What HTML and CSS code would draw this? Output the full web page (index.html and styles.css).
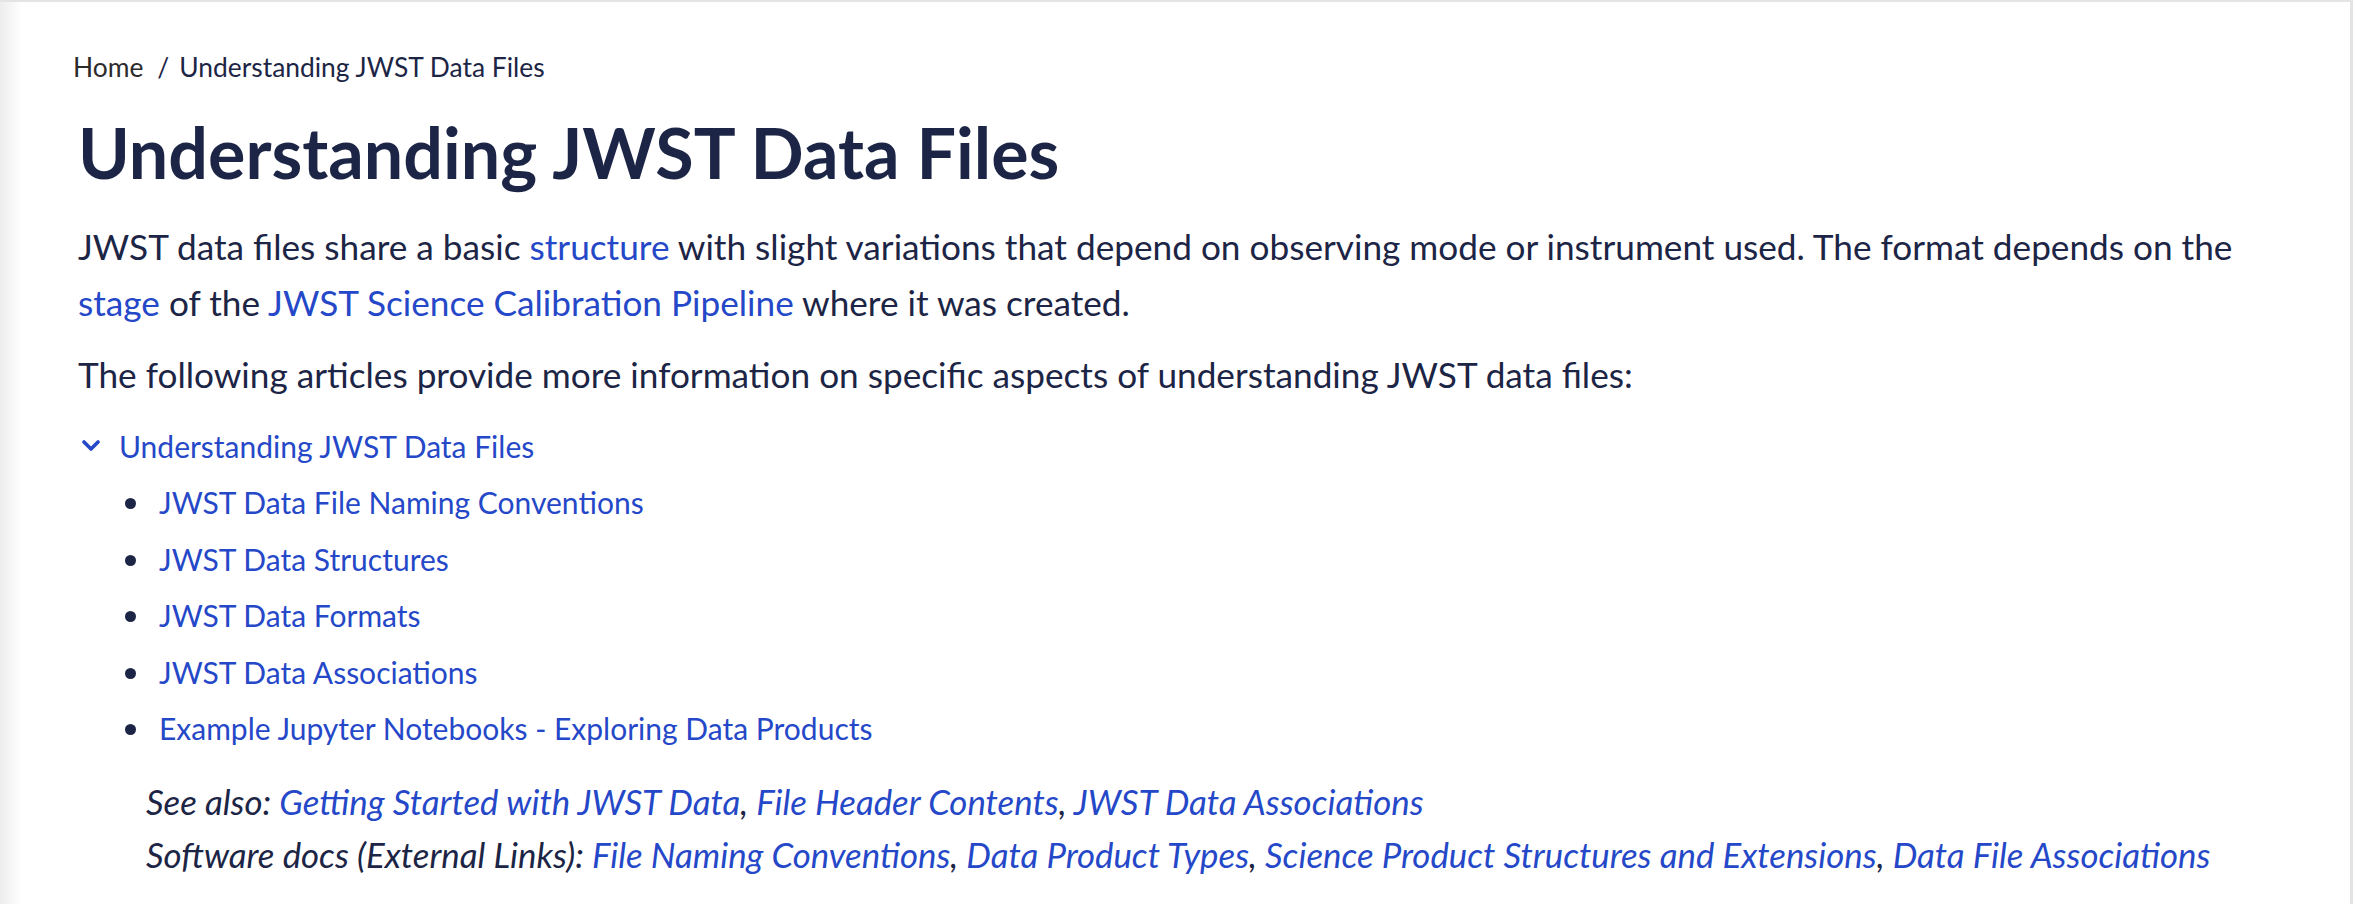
FILE: index.html
```html
<!DOCTYPE html>
<html lang="en">
<head>
<meta charset="utf-8">
<title>Understanding JWST Data Files</title>
<link rel="stylesheet" href="styles.css">
</head>
<body>
<div class="frame">
  <main class="content">
    <nav class="breadcrumb"><a class="crumb-home" href="#">Home</a><span class="crumb-sep">/</span><span class="crumb-current">Understanding JWST Data Files</span></nav>
    <h1 class="title">Understanding JWST Data Files</h1>
    <p class="para">JWST data files share a basic <a href="#">structure</a> with slight variations that depend on observing mode or instrument used. The format depends on the <a href="#">stage</a> of the <a href="#">JWST Science Calibration Pipeline</a> where it was created.</p>
    <p class="para">The following articles provide more information on specific aspects of understanding JWST data files:</p>
    <div class="toggle">
      <svg class="chev" width="18" height="12" viewBox="0 0 18 12"><polyline points="2,2 9,9 16,2" fill="none" stroke="#2548c8" stroke-width="3.6" stroke-linecap="round" stroke-linejoin="round"/></svg>
      <a href="#">Understanding JWST Data Files</a>
    </div>
    <ul class="pages">
      <li><a href="#">JWST Data File Naming Conventions</a></li>
      <li><a href="#">JWST Data Structures</a></li>
      <li><a href="#">JWST Data Formats</a></li>
      <li><a href="#">JWST Data Associations</a></li>
      <li><a href="#">Example Jupyter Notebooks - Exploring Data Products</a></li>
    </ul>
    <div class="seealso">
      <p><em>See also: <a href="#">Getting Started with JWST Data</a>, <a href="#">File Header Contents</a>, <a href="#">JWST Data Associations</a></em></p>
      <p><em>Software docs (External Links): <a href="#">File Naming Conventions</a>, <a href="#">Data Product Types</a>, <a href="#">Science Product Structures and Extensions</a>, <a href="#">Data File Associations</a></em></p>
    </div>
  </main>
</div>
</body>
</html>
```

FILE: styles.css
```css
html, body {
  margin: 0;
  padding: 0;
  background: #ffffff;
}
body {
  font-family: Lato, "Open Sans", sans-serif;
  color: #1c2545;
}
.frame {
  height: 904px;
  box-sizing: border-box;
  border-top: 2px solid #e4e4e4;
  border-right: 3px solid #e4e4e4;
  margin-right: 3px;
  background: linear-gradient(to right, #ededed 0px, #ffffff 22px);
}
.content {
  padding: 50px 78px 0 78px;
}
a {
  color: #2548c8;
  text-decoration: none;
}
.breadcrumb {
  font-size: 26.4px;
  line-height: 30px;
  margin-left: -5px;
}
.crumb-home { color: #2b2b2b; }
.crumb-sep { margin: 0 10px 0 14px; }
.title {
  font-size: 70px;
  font-weight: 700;
  margin: 28px 0 24px;
  line-height: 84px;
  color: #1c2545;
}
.para {
  font-size: 35.2px;
  line-height: 56px;
  margin: 0 0 16px;
}
.toggle {
  display: flex;
  align-items: center;
  gap: 19px;
  font-size: 30px;
  line-height: 56px;
  margin: 4px 0 0 4px;
}
.pages {
  margin: 0;
  padding-left: 81px;
  font-size: 30px;
  line-height: 56.5px;
  list-style: none;
}
.pages li {
  display: flex;
  align-items: center;
}
.pages li::before {
  content: "";
  flex: none;
  width: 11px;
  height: 11px;
  border-radius: 50%;
  background: #1c2545;
  margin: 3px 23px 0 -34px;
}
.seealso {
  font-size: 34.8px;
  line-height: 53px;
  padding-left: 68px;
  margin-top: 18px;
}
.seealso p { margin: 0; }
```
